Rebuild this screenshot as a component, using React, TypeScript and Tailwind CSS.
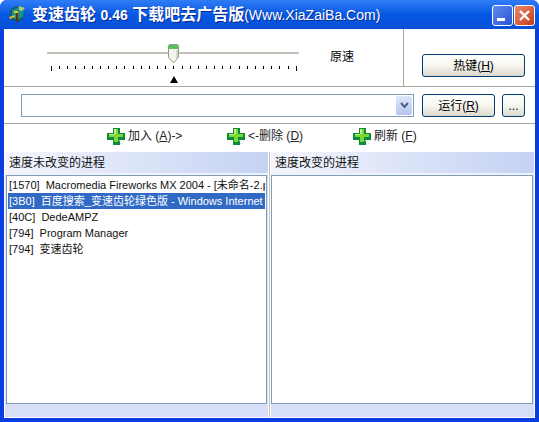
const font = { fontFamily: '"Liberation Sans", "Noto Sans CJK SC", sans-serif' };

const processes = [
  { text: "[1570]  Macromedia Fireworks MX 2004 - [未命名-2.png]" },
  { text: "[3B0]  百度搜索_变速齿轮绿色版 - Windows Internet Explorer", selected: true },
  { text: "[40C]  DedeAMPZ" },
  { text: "[794]  Program Manager" },
  { text: "[794]  变速齿轮" },
];

function AppIcon() {
  return (
    <svg width="16" height="17" viewBox="0 0 16 17" className="shrink-0">
      <circle cx="8" cy="8" r="7.5" fill="#0b5c66" />
      <path d="M3 4 L10 1 L15 5 L14 11 L8 14 L3 11 Z" fill="#1f8f8c" />
      <path d="M10 0 L16 2 L13 5 L10 4 Z" fill="#b9c96a" />
      <rect x="7" y="5" width="2" height="11" fill="#5a3410" />
      <rect x="5" y="5" width="4" height="2" fill="#f0c419" />
      <path d="M0 11 L6 9 L6 11 L1 13 Z" fill="#d9b51f" />
    </svg>
  );
}

function PlusIcon() {
  return (
    <svg width="18" height="18" viewBox="0 0 18 18" className="shrink-0" shapeRendering="crispEdges">
      <path d="M6 1h7v5h5v7h-5v5H6v-5H0V6h6z" fill="#0e8a3c" />
      <path d="M7 2h4v5h5v3h-5v5H7v-5H2V7h5z" fill="#7ad832" />
      <path d="M7 2h2v5H7zM2 7h5v1H2z" fill="#c5f08a" />
      <path d="M12 13h1v1h-1zM14 14h1v1h-1zM15 16h1v1h-1zM13 16h1v1h-1zM16 13h1v1h-1z" fill="#bfe8cc" />
    </svg>
  );
}

function Thumb() {
  return (
    <svg width="11" height="20" viewBox="0 0 11 20">
      <path d="M1.5 .5h8l1 1v12l-5 5.5-5-5.5v-12z" fill="#f4f3ee" stroke="#7fa58a" />
      <path d="M1 1h9v4H1z" fill="#5cc05c" />
      <path d="M8 6h2v8l-2 2z" fill="#d6d4c8" />
    </svg>
  );
}

function XpButton({ children, className }: { children: React.ReactNode; className: string }) {
  return (
    <button
      type="button"
      className={`flex items-center justify-center rounded-[3px] border border-[#003c74] bg-gradient-to-b from-white via-[#f6f5ef] to-[#dcd8cc] text-[12px] text-black ${className}`}
    >
      {children}
    </button>
  );
}

function ActionLink({ label, hotkey, suffix, prefix, className }: { label: string; hotkey: string; suffix?: string; prefix?: string; className: string }) {
  return (
    <div className={`flex items-center gap-[3px] text-[12px] text-[#222] ${className}`}>
      <PlusIcon />
      <span className="whitespace-pre">
        {prefix}
        {label} (<span className="underline">{hotkey}</span>){suffix}
      </span>
    </div>
  );
}

function Panel({ title, className, listClassName, children }: { title: string; className: string; listClassName: string; children?: React.ReactNode }) {
  return (
    <div className={`flex flex-col bg-[#d6dff7] ${className}`}>
      <div className="flex h-[21px] shrink-0 items-center rounded-tr-[3px] bg-gradient-to-r from-[#f4f6fd] to-[#c5d2f3] pl-[4px] text-[12px] text-[#111]">
        {title}
      </div>
      <div className="h-[2px] shrink-0 bg-[#f0f3fc]" />
      <div className={`h-[229px] shrink-0 overflow-hidden border border-[#7f9db9] bg-white pl-[1px] pr-[1px] pt-[1px] ${listClassName}`}>
        {children}
      </div>
    </div>
  );
}

export default function App() {
  return (
    <div className="flex h-[422px] w-[539px] flex-col overflow-hidden rounded-t-[7px] bg-[#0a3ee0] text-black" style={font}>
      {/* title bar */}
      <div className="flex h-[29px] shrink-0 items-center bg-gradient-to-b from-[#2f7df5] via-[#0458e4] to-[#0a4fd6] pl-[9px] pr-[4px]">
        <AppIcon />
        <div className="ml-[7px] flex-1 whitespace-nowrap pt-[1px] text-[16px] font-bold text-white [text-shadow:1px_1px_#0a2a90]">
          变速齿轮 <span className="text-[14px]">0.46</span> 下载吧去广告版<span className="text-[14px] font-normal">(Www.XiaZaiBa.Com)</span>
        </div>
        <div className="mt-[2px] flex h-[21px] w-[21px] items-end justify-start rounded-[3px] border border-white bg-gradient-to-br from-[#5f8cf0] to-[#2a54d0] pb-[4px] pl-[4px]">
          <div className="h-[3px] w-[8px] bg-white" />
        </div>
        <div className="ml-[1px] mt-[2px] flex h-[21px] w-[21px] items-center justify-center rounded-[3px] border border-white bg-gradient-to-br from-[#e88a6a] to-[#c8360f]">
          <svg width="13" height="13" viewBox="0 0 13 13">
            <path d="M2 2 L11 11 M11 2 L2 11" stroke="white" strokeWidth="2.4" />
          </svg>
        </div>
      </div>

      {/* client area */}
      <div className="mx-[4px] flex h-[389px] shrink-0 flex-col bg-white">
        {/* slider row */}
        <div className="flex h-[58px] shrink-0 border-b border-[#aca899]">
          <div className="relative h-full w-[400px] shrink-0 border-r border-[#aca899]">
            <div className="absolute left-[43px] top-[23px] h-[2px] w-[252px] bg-[#c4c2b8]" />
            <div className="absolute left-[164px] top-[15px] flex">
              <Thumb />
            </div>
            <div className="absolute left-[47px] top-[37px] flex w-[246px] justify-between">
              {Array.from({ length: 31 }).map((_, i) => (
                <div key={i} className={`w-[1px] bg-black ${i === 0 || i === 30 ? "h-[5px]" : "h-[3px]"}`} />
              ))}
            </div>
            <div className="absolute left-[166px] top-[47px] h-0 w-0 border-x-[4px] border-b-[7px] border-x-transparent border-b-black" />
            <div className="absolute left-[326px] top-[19px] text-[12px]">原速</div>
          </div>
          <div className="flex flex-1 items-end pb-[9px] pl-[18px]">
            <XpButton className="h-[23px] w-[103px]">
              <span>
                热键(<span className="underline">H</span>)
              </span>
            </XpButton>
          </div>
        </div>

        {/* command row */}
        <div className="flex h-[37px] shrink-0 items-center border-b border-[#aca899] pl-[17px]">
          <div className="flex h-[23px] w-[393px] items-center justify-end border border-[#7f9db9] bg-white pr-[1px]">
            <div className="flex h-[19px] w-[16px] items-center justify-center rounded-[2px] bg-gradient-to-b from-[#dfe7fb] to-[#b3c4f0]">
              <svg width="9" height="7" viewBox="0 0 9 7">
                <path d="M1 1 L4.5 5 L8 1" fill="none" stroke="#4d6185" strokeWidth="2" />
              </svg>
            </div>
          </div>
          <XpButton className="ml-[8px] mt-[1px] h-[23px] w-[73px]">
            <span>
              运行(<span className="underline">R</span>)
            </span>
          </XpButton>
          <XpButton className="ml-[7px] mt-[1px] h-[23px] w-[23px]">...</XpButton>
        </div>

        {/* actions */}
        <div className="relative h-[28px] shrink-0">
          <ActionLink className="absolute left-[103px] top-[3px]" label="加入" hotkey="A" suffix="->" />
          <ActionLink className="absolute left-[223px] top-[3px]" prefix="<-" label="删除" hotkey="D" />
          <ActionLink className="absolute left-[349px] top-[3px]" label="刷新" hotkey="F" />
        </div>

        {/* panels */}
        <div className="flex flex-1 pl-[1px] pr-[1px]">
          <Panel title="速度未改变的进程" className="w-[263px]" listClassName="mx-[1px]">
            {processes.map((p) => (
              <div
                key={p.text}
                className={`h-[16px] overflow-hidden whitespace-pre pl-[1px] text-[11px] leading-[16px] ${p.selected ? "bg-[#316ac5] text-white" : "text-[#111]"}`}
              >
                {p.text}
              </div>
            ))}
          </Panel>
          <div className="mx-[1px] w-[1px] shrink-0 bg-[#c4c2b8]" />
          <Panel title="速度改变的进程" className="flex-1" listClassName="mr-[1px]" />
        </div>
        <div className="h-[1px] shrink-0 bg-white" />
      </div>
    </div>
  );
}
